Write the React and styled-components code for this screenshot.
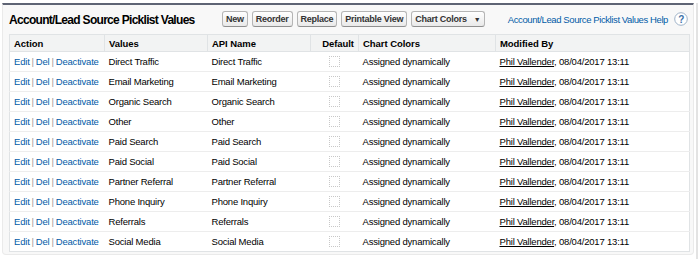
import React from 'react';
import styled, { createGlobalStyle } from 'styled-components';

const GlobalStyle = createGlobalStyle`
  body {
    margin: 0;
    background: #fff;
    font-family: Arial, "Liberation Sans", sans-serif;
    font-size: 9.5px;
    color: #000;
  }
`;

const Page = styled.div`
  display: flex;
  height: 259px;
  padding: 3px 0 0 2px;
  box-sizing: border-box;
`;

const Panel = styled.div`
  width: 692px;
  height: 252px;
  box-sizing: border-box;
  background: #f8f8f8;
  border: 1px solid #eaeaea;
  border-top: 2px solid #5e6474;
  border-radius: 0 0 4px 4px;
  padding: 0 3px 0 6px;
`;

const Scroll = styled.div`
  width: 2px;
  margin-left: 2px;
  background: #e3e3e3;
`;

const Header = styled.div`
  display: flex;
  align-items: center;
  height: 29px;
`;

const Title = styled.h2`
  margin: 0;
  font-size: 12px;
  font-weight: bold;
  color: #000;
  width: 213px;
  letter-spacing: -0.7px;
  white-space: nowrap;
`;

const Buttons = styled.div`
  display: flex;
  gap: 4px;
  margin-top: -1px;
`;

const Button = styled.button`
  font-family: Arial, "Liberation Sans", sans-serif;
  font-size: 9px;
  font-weight: bold;
  letter-spacing: -0.25px;
  white-space: nowrap;
  color: #333;
  height: 16px;
  padding: 0 3px;
  border: 1px solid #b5b5b5;
  border-bottom-color: #8f8f8f;
  border-radius: 3px;
  background: linear-gradient(#ffffff, #e9e9e9);
  display: flex;
  align-items: center;
  gap: 7px;
`;

const Caret = styled.span`
  font-size: 7px;
  letter-spacing: 0;
`;

const Help = styled.a`
  margin-left: auto;
  display: flex;
  align-items: center;
  gap: 6px;
  color: #015ba7;
  font-size: 9.5px;
  letter-spacing: -0.4px;
  text-decoration: none;
  white-space: nowrap;
  margin-top: -1px;
  margin-right: 2px;
`;

const Table = styled.table`
  width: 681px;
  border-collapse: collapse;
  background: #fff;
  border: 1px solid #e0e3e5;
  table-layout: fixed;
`;

const Th = styled.th`
  background: #f2f3f3;
  height: 16px;
  padding: 0 4px;
  font-size: 9.5px;
  letter-spacing: -0.05px;
  font-weight: bold;
  color: #000;
  text-align: ${p => p.$align || 'left'};
  border-bottom: 1px solid #e0e3e5;
  border-left: 1px solid #e0e3e5;
  &:first-child { border-left: none; }
`;

const Td = styled.td`
  height: 19px;
  padding: 0 4px;
  font-size: 9.5px;
  letter-spacing: -0.2px;
  color: #000;
  border-bottom: 1px solid #ededed;
  text-align: ${p => p.$align || 'left'};
  white-space: nowrap;
  overflow: hidden;
`;

const Row = styled.tr`
  &:last-child td { border-bottom: none; }
`;

const Link = styled.a`
  color: #015ba7;
  text-decoration: none;
`;

const Sep = styled.span`
  color: #999;
  margin: 0 2px;
`;

const UserLink = styled.a`
  color: #000;
  text-decoration: underline;
`;

const Box = styled.span`
  display: inline-block;
  width: 9px;
  height: 9px;
  border: 1px dotted #c8c8c8;
  vertical-align: middle;
`;

const HelpIcon = () => (
  <svg width="14" height="14" viewBox="0 0 14 14">
    <circle cx="7" cy="7" r="6.3" fill="#fff" stroke="#9fb3c8" strokeWidth="1" />
    <text x="7" y="10.5" textAnchor="middle" fontSize="10" fontWeight="bold" fill="#3c6fa8" fontFamily="Arial, Liberation Sans, sans-serif">?</text>
  </svg>
);

const values = [
  'Direct Traffic',
  'Email Marketing',
  'Organic Search',
  'Other',
  'Paid Search',
  'Paid Social',
  'Partner Referral',
  'Phone Inquiry',
  'Referrals',
  'Social Media',
];

export default function App() {
  return (
    <>
      <GlobalStyle />
      <Page>
        <Panel>
          <Header>
            <Title>Account/Lead Source Picklist Values</Title>
            <Buttons>
              <Button>New</Button>
              <Button>Reorder</Button>
              <Button>Replace</Button>
              <Button>Printable View</Button>
              <Button>Chart Colors <Caret>▼</Caret></Button>
            </Buttons>
            <Help href="#">
              Account/Lead Source Picklist Values Help
              <HelpIcon />
            </Help>
          </Header>
          <Table>
            <colgroup>
              <col style={{ width: 95 }} />
              <col style={{ width: 103 }} />
              <col style={{ width: 103 }} />
              <col style={{ width: 48 }} />
              <col style={{ width: 137 }} />
              <col />
            </colgroup>
            <thead>
              <tr>
                <Th>Action</Th>
                <Th>Values</Th>
                <Th>API Name</Th>
                <Th $align="right">Default</Th>
                <Th>Chart Colors</Th>
                <Th>Modified By</Th>
              </tr>
            </thead>
            <tbody>
              {values.map(v => (
                <Row key={v}>
                  <Td>
                    <Link href="#">Edit</Link><Sep>|</Sep>
                    <Link href="#">Del</Link><Sep>|</Sep>
                    <Link href="#">Deactivate</Link>
                  </Td>
                  <Td>{v}</Td>
                  <Td>{v}</Td>
                  <Td $align="center"><Box /></Td>
                  <Td>Assigned dynamically</Td>
                  <Td><UserLink href="#">Phil Vallender</UserLink>, 08/04/2017 13:11</Td>
                </Row>
              ))}
            </tbody>
          </Table>
        </Panel>
        <Scroll />
      </Page>
    </>
  );
}
